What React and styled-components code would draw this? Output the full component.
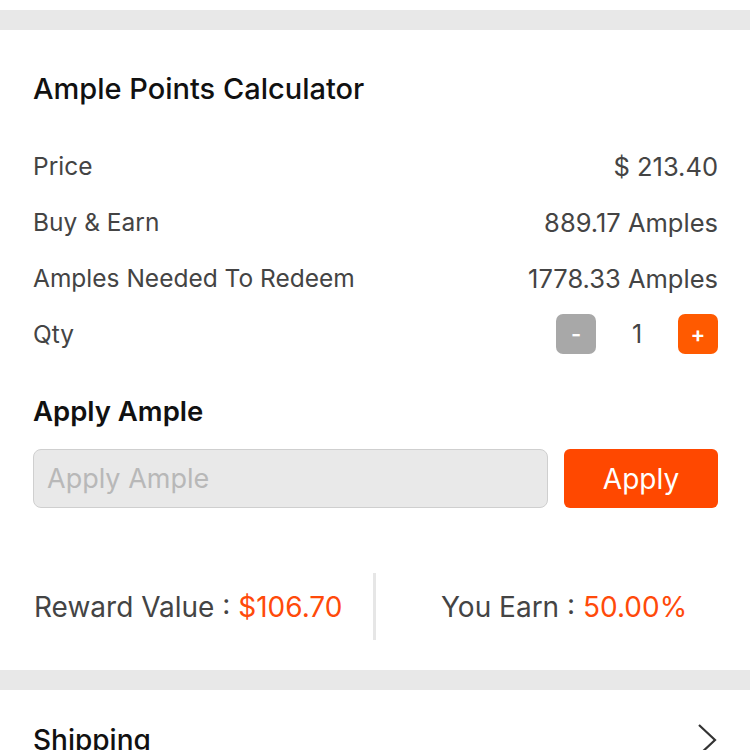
import styled, { createGlobalStyle } from "styled-components";

const ORANGE = "#ff4a0a";

const GlobalStyle = createGlobalStyle`
  body {
    margin: 0;
    background: #fff;
    font-family: Inter, "Noto Sans", sans-serif;
  }
`;

const rows = [
  { label: "Price", value: "$ 213.40" },
  { label: "Buy & Earn", value: "889.17 Amples" },
  { label: "Amples Needed To Redeem", value: "1778.33 Amples" },
];

const App = () => {
  return (
    <>
      <GlobalStyle />
      <Page>
        <Band />
        <Card>
          <Title>Ample Points Calculator</Title>
          <List>
            {rows.map((row) => (
              <Row key={row.label}>
                <Label>{row.label}</Label>
                <Value>{row.value}</Value>
              </Row>
            ))}
            <Row>
              <Label>Qty</Label>
              <Stepper>
                <StepButton>-</StepButton>
                <Count>1</Count>
                <StepButton active>+</StepButton>
              </Stepper>
            </Row>
          </List>
          <SubTitle>Apply Ample</SubTitle>
          <ApplyRow>
            <Input placeholder="Apply Ample" />
            <ApplyButton>Apply</ApplyButton>
          </ApplyRow>
          <Summary>
            <SummaryItem>
              Reward Value : <Accent>$106.70</Accent>
            </SummaryItem>
            <Split />
            <SummaryItem indent>
              You Earn : <Accent>50.00%</Accent>
            </SummaryItem>
          </Summary>
        </Card>
        <Band />
        <Shipping>
          <ShippingTitle>Shipping</ShippingTitle>
          <svg width="22" height="36" viewBox="0 0 22 36" fill="none">
            <path d="M3 3 L19 18 L3 33" stroke="#333" strokeWidth="2.2" />
          </svg>
        </Shipping>
      </Page>
    </>
  );
};

const Page = styled.div`
  padding-top: 10px;
  height: 750px;
  overflow: hidden;
  box-sizing: border-box;
`;

const Band = styled.div`
  height: 20px;
  background: #e8e8e8;
`;

const Card = styled.section`
  padding: 40px 32px 30px 33px;
`;

const Title = styled.h2`
  margin: 0 0 30px;
  font-size: 29px;
  line-height: 38px;
  font-weight: 500;
  color: #111;
`;

const List = styled.div`
  display: flex;
  flex-direction: column;
`;

const Row = styled.div`
  height: 56px;
  display: flex;
  align-items: center;
  justify-content: space-between;
`;

const Label = styled.span`
  font-size: 24.5px;
  color: #444;
`;

const Value = styled.span`
  font-size: 25.5px;
  color: #444;
`;

const Stepper = styled.div`
  display: flex;
  align-items: center;
`;

const StepButton = styled.button`
  width: 40px;
  height: 40px;
  border: none;
  border-radius: 7px;
  padding: 0;
  background: ${({ active }) => (active ? "#ff5a00" : "#a8a8a8")};
  color: #fff;
  font-size: 22px;
  font-weight: 600;
  font-family: inherit;
`;

const Count = styled.span`
  width: 82px;
  text-align: center;
  font-size: 25px;
  color: #444;
`;

const SubTitle = styled.h3`
  margin: 31px 0 20px;
  font-size: 27.5px;
  line-height: 36px;
  font-weight: 600;
  color: #111;
`;

const ApplyRow = styled.div`
  display: flex;
  gap: 16px;
  height: 59px;
`;

const Input = styled.input`
  flex: 1;
  box-sizing: border-box;
  border: 1px solid #cfcfcf;
  border-radius: 8px;
  background: #e9e9e9;
  padding: 0 13px;
  font-size: 27px;
  font-family: inherit;
  color: #444;

  &::placeholder {
    color: #b8b8b8;
  }
`;

const ApplyButton = styled.button`
  width: 154px;
  border: none;
  border-radius: 6px;
  background: #ff4800;
  color: #fff;
  font-size: 28px;
  font-family: inherit;
`;

const Summary = styled.div`
  margin-top: 65px;
  height: 67px;
  display: flex;
  align-items: center;
`;

const SummaryItem = styled.div`
  flex: ${({ indent }) => (indent ? "1" : "0 0 340px")};
  box-sizing: border-box;
  padding-left: ${({ indent }) => (indent ? "65px" : "1px")};
  white-space: nowrap;
  font-size: 28px;
  color: #444;
`;

const Split = styled.div`
  width: 3px;
  align-self: stretch;
  background: #e6e6e6;
`;

const Accent = styled.span`
  color: ${ORANGE};
`;

const Shipping = styled.div`
  display: flex;
  align-items: center;
  justify-content: space-between;
  padding: 32px 32px 0 33px;
`;

const ShippingTitle = styled.span`
  font-size: 28px;
  font-weight: 500;
  color: #111;
`;

export default App;
